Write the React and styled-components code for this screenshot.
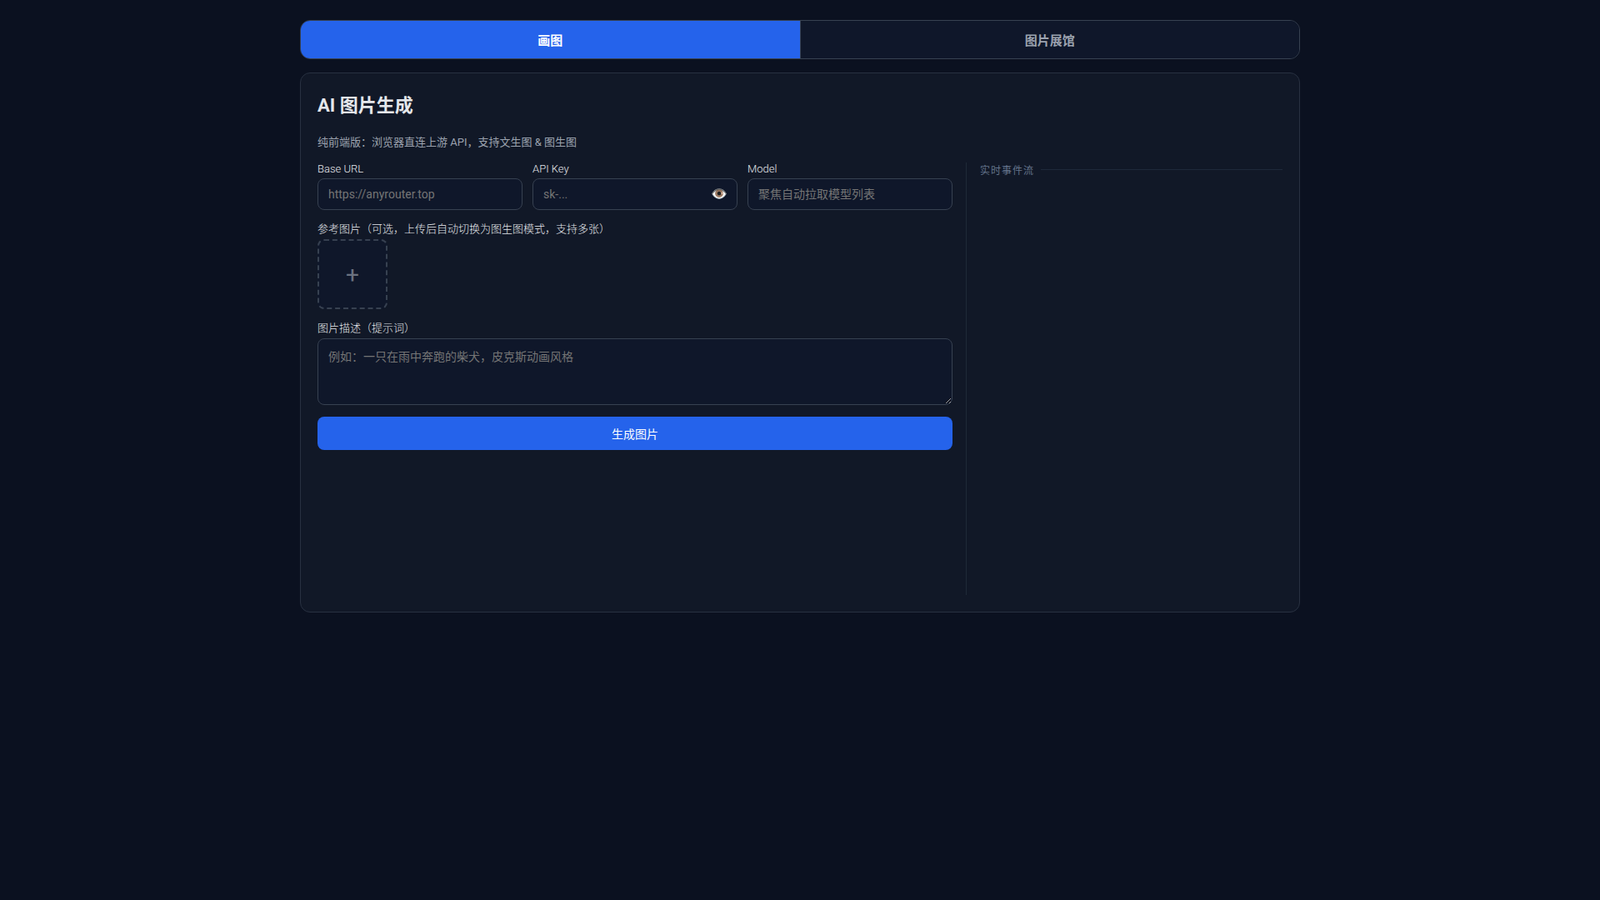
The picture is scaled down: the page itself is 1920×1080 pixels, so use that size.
import React from "react";
import styled, { createGlobalStyle } from "styled-components";

const Global = createGlobalStyle`
  * { box-sizing: border-box; }
  html, body { margin: 0; padding: 0; background: #0b1120; }
  body { font-family: Roboto, "Noto Sans CJK SC", sans-serif; color: #e5e7eb; min-height: 100vh; }
  input::placeholder, textarea::placeholder { color: #757575; opacity: 1; }
`;

const Page = styled.main`
  width: 1200px;
  margin: 0 auto;
  padding-top: 24px;
`;
const Tabs = styled.div`
  display: flex;
  height: 47px;
  margin-bottom: 16px;
  border: 1px solid #374151;
  border-radius: 12px;
  overflow: hidden;
  background: #111827;
`;
const Tab = styled.button`
  flex: 1;
  border: 0;
  border-left: ${p => (p.$second ? "1px solid #374151" : "0")};
  background: ${p => (p.$active ? "#2563eb" : "#0f172a")};
  color: ${p => (p.$active ? "#ffffff" : "#9ca3af")};
  font: 600 15px Roboto, "Noto Sans CJK SC", sans-serif;
`;
const Panel = styled.section`
  height: 648px;
  padding: 20px;
  background: #111827;
  border: 1px solid #283141;
  border-radius: 12px;
`;
const Title = styled.h1`
  margin: 0 0 15px;
  font-size: 22px;
  line-height: 37px;
  font-weight: 700;
  color: #e5e7eb;
`;
const Subtitle = styled.p`
  margin: 0 0 14px;
  font-size: 13px;
  line-height: 21px;
  color: #9ca3af;
`;
const Columns = styled.div`
  display: grid;
  grid-template-columns: 1fr 380px;
  gap: 16px;
  height: 519px;
`;
const Form = styled.form`
  display: flex;
  flex-direction: column;
  min-width: 0;
`;
const Fields = styled.div`
  display: grid;
  grid-template-columns: repeat(3, 1fr);
  gap: 12px;
  margin-bottom: 12px;
`;
const Field = styled.div`
  display: flex;
  flex-direction: column;
`;
const Label = styled.label`
  display: block;
  margin-bottom: 4px;
  font-size: 13px;
  font-weight: 300;
  color: #e5e7eb;
`;
const InputWrap = styled.div`
  position: relative;
`;
const Input = styled.input`
  display: block;
  width: 100%;
  height: 38px;
  padding: 0 12px;
  background: #0f172a;
  border: 1px solid #374151;
  border-radius: 8px;
  color: #e5e7eb;
  font: 14px Roboto, "Noto Sans CJK SC", sans-serif;
`;
const Eye = styled.button`
  position: absolute;
  right: 12px;
  top: 50%;
  transform: translateY(-50%);
  padding: 0;
  border: 0;
  background: none;
  font-size: 16px;
  line-height: 1;
  cursor: pointer;
`;
const Upload = styled.button`
  width: 84px;
  height: 84px;
  margin-bottom: 12px;
  padding: 0;
  background: #0f172a;
  border: 2px dashed #374151;
  border-radius: 8px;
  color: #6b7280;
  font: 28px Roboto, sans-serif;
`;
const Prompt = styled.textarea`
  display: block;
  width: 100%;
  height: 80px;
  margin-bottom: 14px;
  padding: 10px 12px;
  background: #0f172a;
  border: 1px solid #374151;
  border-radius: 8px;
  color: #e5e7eb;
  font: 14px Roboto, "Noto Sans CJK SC", sans-serif;
`;
const Submit = styled.button`
  height: 40px;
  border: 0;
  border-radius: 8px;
  background: #2563eb;
  color: #ffffff;
  font: 400 14px Roboto, "Noto Sans CJK SC", sans-serif;
`;
const Events = styled.aside`
  padding-left: 16px;
  border-left: 1px solid #1f2937;
`;
const EventsHead = styled.div`
  display: flex;
  align-items: center;
  gap: 8px;
  height: 17px;
  font-size: 12px;
  letter-spacing: 1px;
  color: #64748b;
  &::after {
    content: "";
    flex: 1;
    height: 1px;
    background: #1e293b;
  }
`;

export default function App() {
  return (
    <>
      <Global />
      <Page>
        <Tabs>
          <Tab $active>画图</Tab>
          <Tab $second>图片展馆</Tab>
        </Tabs>
        <Panel>
          <Title>AI 图片生成</Title>
          <Subtitle>纯前端版：浏览器直连上游 API，支持文生图 &amp; 图生图</Subtitle>
          <Columns>
            <Form>
              <Fields>
                <Field>
                  <Label>Base URL</Label>
                  <Input placeholder="https://anyrouter.top" />
                </Field>
                <Field>
                  <Label>API Key</Label>
                  <InputWrap>
                    <Input placeholder="sk-..." />
                    <Eye type="button">👁️</Eye>
                  </InputWrap>
                </Field>
                <Field>
                  <Label>Model</Label>
                  <Input placeholder="聚焦自动拉取模型列表" />
                </Field>
              </Fields>
              <Label>参考图片（可选，上传后自动切换为图生图模式，支持多张）</Label>
              <Upload type="button">+</Upload>
              <Label>图片描述（提示词）</Label>
              <Prompt placeholder="例如：一只在雨中奔跑的柴犬，皮克斯动画风格" />
              <Submit type="button">生成图片</Submit>
            </Form>
            <Events>
              <EventsHead>实时事件流</EventsHead>
            </Events>
          </Columns>
        </Panel>
      </Page>
    </>
  );
}
